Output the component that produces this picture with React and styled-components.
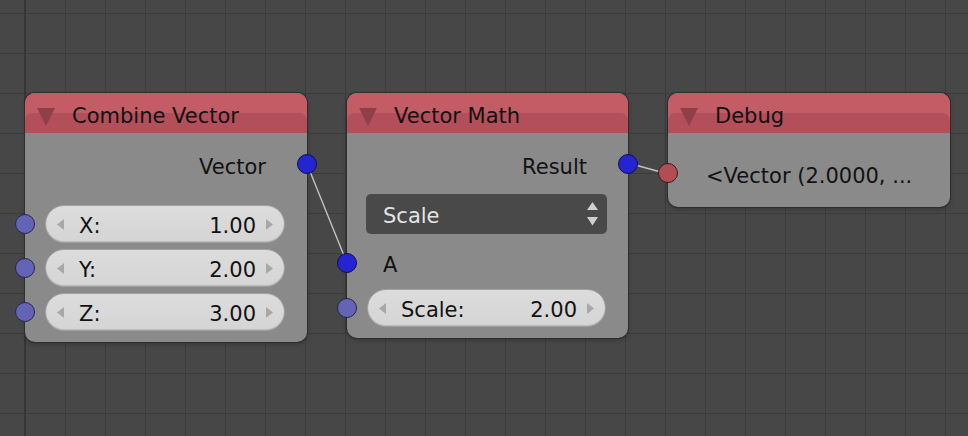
import React from 'react';
import styled, { createGlobalStyle } from 'styled-components';

const GlobalStyle = createGlobalStyle`
  html, body {
    margin: 0;
    padding: 0;
    background: #474747;
  }

  body {
    font-family: "DejaVu Sans", "Liberation Sans", sans-serif;
  }
`;

const Arrow = ({ dir }) => (
  <svg width="7" height="11" viewBox="0 0 7 11">
    {dir === 'left' ? (
      <polygon points="7,0 7,11 0,5.5" fill="#a8a8a8" />
    ) : (
      <polygon points="0,0 0,11 7,5.5" fill="#a8a8a8" />
    )}
  </svg>
);

const Collapse = () => (
  <CollapseIcon width="18" height="18" viewBox="0 0 18 18">
    <polygon points="0,0 18,0 9,18" fill="#8e3f48" />
  </CollapseIcon>
);

const UpDown = () => (
  <svg width="11" height="24" viewBox="0 0 11 24">
    <polygon points="0,8 5.5,0 11,8" fill="#cfcfcf" />
    <polygon points="0,15 11,15 5.5,23.5" fill="#cfcfcf" />
  </svg>
);

const NumberField = ({ label, value, socket, top }) => (
  <FieldRow $top={top}>
    {socket && <Socket $side="left" $color={socket} />}
    <Pill>
      <Arrow dir="left" />
      <PillLabel>{label}</PillLabel>
      <PillValue>{value}</PillValue>
      <Arrow dir="right" />
    </Pill>
  </FieldRow>
);

const App = () => {
  return (
    <>
      <GlobalStyle />
      <Canvas>
        <Links width="968" height="436">
          <line x1="307" y1="164" x2="347" y2="263" />
          <line x1="628" y1="163" x2="668" y2="174" />
        </Links>

        <Node $x={25} $y={93} $w={282}>
          <Header>
            <Collapse />
            <Title>Combine Vector</Title>
          </Header>
          <Body $pad="10px 0 11px">
            <OutputRow>
              Vector
              <Socket $side="right" $color="blue" />
            </OutputRow>
            <NumberField label="X:" value="1.00" socket="purple" top={18} />
            <NumberField label="Y:" value="2.00" socket="purple" top={6} />
            <NumberField label="Z:" value="3.00" socket="purple" top={6} />
          </Body>
        </Node>

        <Node $x={347} $y={93} $w={281}>
          <Header>
            <Collapse />
            <Title>Vector Math</Title>
          </Header>
          <Body $pad="10px 0 11px">
            <OutputRow>
              Result
              <Socket $side="right" $color="blue" />
            </OutputRow>
            <Dropdown>
              <DropdownText>Scale</DropdownText>
              <UpDown />
            </Dropdown>
            <InputRow>
              <Socket $side="left" $color="blue" />
              A
            </InputRow>
            <NumberField label="Scale:" value="2.00" socket="purple" top={4} />
          </Body>
        </Node>

        <Node $x={668} $y={93} $w={282}>
          <Header>
            <Collapse />
            <Title>Debug</Title>
          </Header>
          <Body $pad="18px 0 12px">
            <DebugRow>
              <Socket $side="left" $color="red" />
              &lt;Vector (2.0000, ...
            </DebugRow>
          </Body>
        </Node>
      </Canvas>
    </>
  );
};

export default App;

const socketColors = {
  blue: { fill: '#2424d2', line: '#10104a' },
  purple: { fill: '#6464b6', line: '#252550' },
  red: { fill: '#b24e52', line: '#3c1c1e' },
};

const Canvas = styled.div`
  position: relative;
  width: 968px;
  height: 436px;
  overflow: hidden;
  background-color: #474747;
  background-image:
    linear-gradient(90deg, transparent 24px, #363636 24px, #363636 26px, transparent 26px),
    linear-gradient(90deg, #3c3c3c 1px, transparent 1px),
    linear-gradient(#3c3c3c 1px, transparent 1px);
  background-size: 968px 436px, 40px 40px, 40px 40px;
  background-position: 0 0, 25px 13px, 25px 13px;
  background-repeat: no-repeat, repeat, repeat;
`;

const Links = styled.svg`
  position: absolute;
  left: 0;
  top: 0;
  z-index: 0;

  line {
    stroke: #c2c2c2;
    stroke-width: 1.4;
  }
`;

const Node = styled.div`
  position: absolute;
  left: ${(p) => p.$x}px;
  top: ${(p) => p.$y}px;
  width: ${(p) => p.$w}px;
  z-index: 1;
  background: #8a8a8a;
  border-radius: 10px;
  box-shadow: 0 0 0 1px #2e2e2e, 0 2px 5px rgba(0, 0, 0, 0.25);
  color: #121212;
  font-size: 21px;
`;

const Header = styled.div`
  position: relative;
  display: flex;
  align-items: center;
  height: 40px;
  padding: 7px 0 0 12px;
  box-sizing: border-box;
  background: #c45c66;
  border-radius: 10px 10px 0 0;

  &::before {
    content: '';
    position: absolute;
    left: 0;
    right: 0;
    bottom: 0;
    height: 20px;
    background: #b34f5a;
    border-radius: 8px 8px 0 0;
  }
`;

const CollapseIcon = styled.svg`
  position: relative;
  margin-right: 17px;
  flex-shrink: 0;
`;

const Title = styled.span`
  position: relative;
  line-height: 1;
`;

const Body = styled.div`
  display: flex;
  flex-direction: column;
  padding: ${(p) => p.$pad};
`;

const Socket = styled.span`
  position: absolute;
  top: 50%;
  ${(p) => (p.$side === 'left' ? 'left: -10px;' : 'right: -10px;')}
  width: 20px;
  height: 20px;
  margin-top: -10px;
  box-sizing: border-box;
  border-radius: 50%;
  background: ${(p) => socketColors[p.$color].fill};
  border: 1px solid ${(p) => socketColors[p.$color].line};
`;

const OutputRow = styled.div`
  position: relative;
  display: flex;
  align-items: center;
  justify-content: flex-end;
  height: 44px;
  padding: 4px 41px 0 0;
  box-sizing: border-box;
  line-height: 1;

  ${Socket} {
    margin-top: -11px;
  }
`;

const InputRow = styled.div`
  position: relative;
  display: flex;
  align-items: center;
  height: 44px;
  margin-top: 7px;
  padding: 4px 0 0 36px;
  box-sizing: border-box;
  line-height: 1;
`;

const DebugRow = styled(InputRow)`
  margin-top: 0;
  padding: 6px 0 0 38px;
  white-space: nowrap;
`;

const FieldRow = styled.div`
  position: relative;
  margin-top: ${(p) => p.$top}px;
  padding: 0 22px 0 20px;
`;

const Pill = styled.div`
  display: flex;
  align-items: center;
  height: 38px;
  padding: 0 11px;
  box-sizing: border-box;
  background: linear-gradient(#dcdcdc, #d5d5d5);
  border: 1px solid #a2a2a2;
  border-radius: 19px;
  box-shadow: inset 0 -1px 0 #bababa;
  line-height: 1;
`;

const PillLabel = styled.span`
  flex: 1;
  margin-left: 15px;
  padding-top: 4px;
`;

const PillValue = styled.span`
  margin-right: 10px;
  padding-top: 4px;
`;

const Dropdown = styled.div`
  display: flex;
  align-items: center;
  justify-content: space-between;
  height: 40px;
  margin: 7px 21px 0 19px;
  padding: 0 9px 0 17px;
  box-sizing: border-box;
  background: #494949;
  border-radius: 5px;
  color: #e4e4e4;
  line-height: 1;
`;

const DropdownText = styled.span`
  padding-top: 4px;
`;
